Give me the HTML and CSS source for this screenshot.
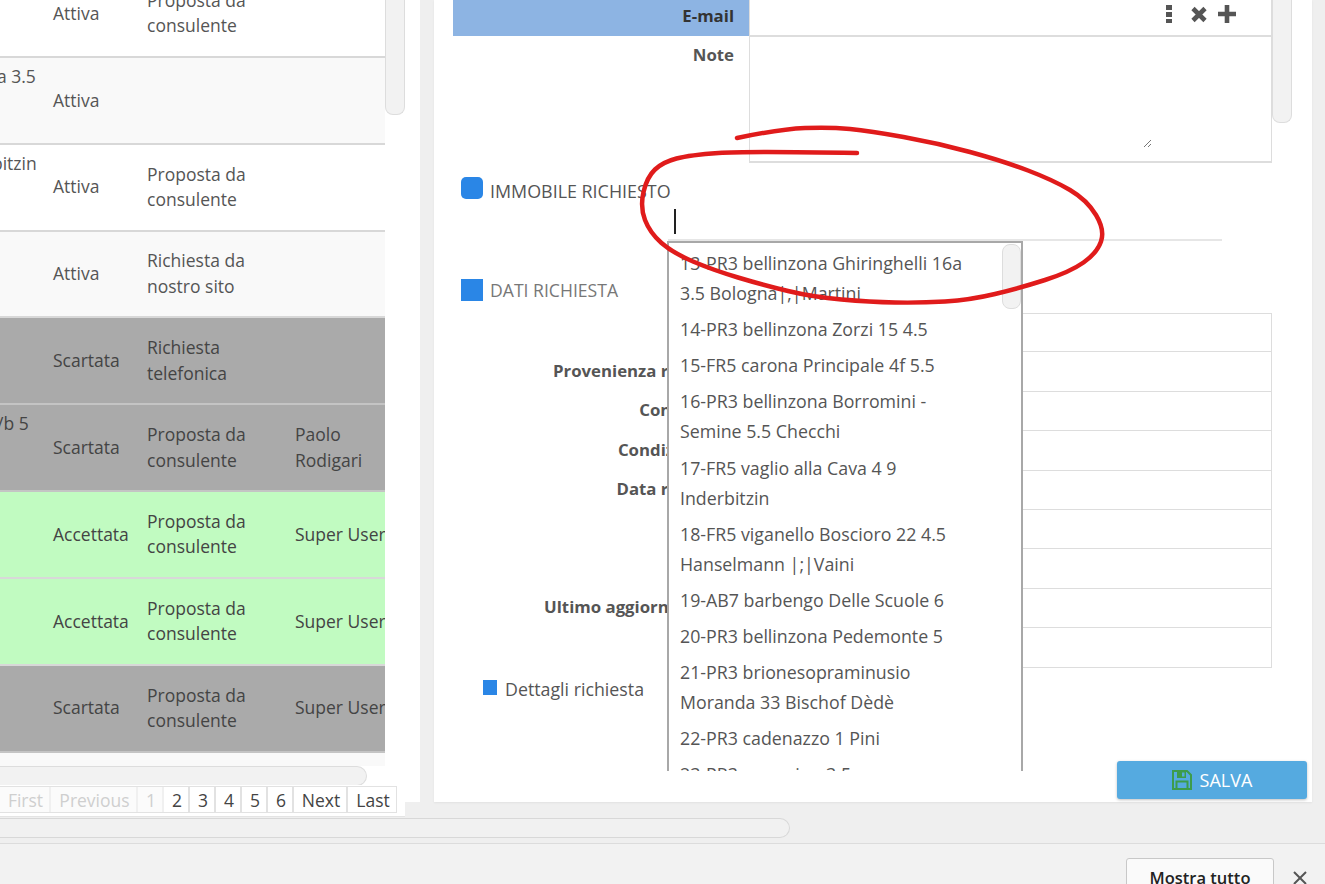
FILE: index.html
```html
<!DOCTYPE html>
<html lang="it">
<head>
  <meta charset="UTF-8">
  <title>Richieste</title>
  <link rel="stylesheet" href="styles.css">
</head>
<body>
  <div class="panels">
    <!-- elenco richieste -->
    <div class="list-panel">
      <div class="list">
        <div class="list-body">
          <div class="table">
            <div class="rows">
              <div class="row"><div class="c-name"></div><div class="c-state">Attiva</div><div class="c-source">Proposta da consulente</div><div class="c-user"></div></div>
              <div class="row alt"><div class="c-name">a 3.5</div><div class="c-state">Attiva</div><div class="c-source"></div><div class="c-user"></div></div>
              <div class="row"><div class="c-name cut">bitzin</div><div class="c-state">Attiva</div><div class="c-source">Proposta da consulente</div><div class="c-user"></div></div>
              <div class="row alt"><div class="c-name"></div><div class="c-state">Attiva</div><div class="c-source">Richiesta da nostro sito</div><div class="c-user"></div></div>
              <div class="row grey"><div class="c-name"></div><div class="c-state">Scartata</div><div class="c-source">Richiesta telefonica</div><div class="c-user"></div></div>
              <div class="row grey"><div class="c-name">/b 5</div><div class="c-state">Scartata</div><div class="c-source">Proposta da consulente</div><div class="c-user">Paolo Rodigari</div></div>
              <div class="row green"><div class="c-name"></div><div class="c-state">Accettata</div><div class="c-source">Proposta da consulente</div><div class="c-user">Super User</div></div>
              <div class="row green"><div class="c-name"></div><div class="c-state">Accettata</div><div class="c-source">Proposta da consulente</div><div class="c-user">Super User</div></div>
              <div class="row grey"><div class="c-name"></div><div class="c-state">Scartata</div><div class="c-source">Proposta da consulente</div><div class="c-user">Super User</div></div>
            </div>
            <div class="table-foot"></div>
            <div class="hscroll"><div class="hscroll-thumb"></div></div>
          </div>
          <div class="vscroll"><div class="vscroll-thumb"></div></div>
        </div>
        <div class="pager">
          <a class="off first">First</a>
          <a class="off prev">Previous</a>
          <a class="off num">1</a>
          <a class="num">2</a>
          <a class="num">3</a>
          <a class="num">4</a>
          <a class="num">5</a>
          <a class="num">6</a>
          <a class="next">Next</a>
          <a class="last">Last</a>
        </div>
      </div>
      <div class="list-side"></div>
    </div>

    <!-- scheda richiesta -->
    <div class="card">
      <div class="card-main">
        <div class="form">
          <div class="field email">
            <div class="field-label">E-mail</div>
            <div class="field-input">
              <svg class="tool" width="72" height="24" viewBox="0 0 72 24">
                <path fill="#555" d="M0 4h6v5H0zM0 11h6v5H0zM0 18h6v4H0z"/>
                <path fill="none" stroke="#555" stroke-width="4.600" d="M27 7.500l12 12M39 7.500l-12 12"/>
                <path fill="none" stroke="#555" stroke-width="4.600" d="M61 4v18M52 13h18"/>
              </svg>
            </div>
          </div>
          <div class="field note">
            <div class="field-label">Note</div>
            <div class="field-input">
              <svg class="grip" width="10" height="10" viewBox="0 0 10 10">
                <path fill="none" stroke="#777" d="M1 9l7-7M5 9l3-3"/>
              </svg>
            </div>
          </div>

          <div class="section">
            <span class="mark round"></span>
            <span class="section-low">IMMOBILE RICHIESTO</span>
          </div>
          <div class="search-line"><span class="caret"></span></div>

          <div class="section second">
            <span class="mark"></span>
            <span class="muted">DATI RICHIESTA</span>
          </div>
          <div class="fields">
            <div class="field"><div class="field-label"></div><div class="field-input"></div></div>
            <div class="field"><div class="field-label">Provenienza richiesta</div><div class="field-input"></div></div>
            <div class="field"><div class="field-label">Consulente</div><div class="field-input"></div></div>
            <div class="field"><div class="field-label">Condizione rif</div><div class="field-input"></div></div>
            <div class="field"><div class="field-label">Data richiesta</div><div class="field-input"></div></div>
            <div class="field"><div class="field-label"></div><div class="field-input"></div></div>
            <div class="field"><div class="field-label"></div><div class="field-input"></div></div>
            <div class="field"><div class="field-label">Ultimo aggiornamento</div><div class="field-input"></div></div>
            <div class="field"><div class="field-label">Note</div><div class="field-input"></div></div>
          </div>
          <div class="details">
            <span class="mark small"></span>
            <span>Dettagli richiesta</span>
          </div>
        </div>
        <div class="vscroll form-scroll"><div class="vscroll-thumb"></div></div>
      </div>
      <div class="card-foot">
        <button class="save">
          <svg width="20" height="20" viewBox="0 0 20 20">
            <path fill="none" stroke="#3d9c4b" stroke-width="2" d="M1 1h14l4 4v14H1z"/>
            <path fill="#3d9c4b" d="M5 1h9v7H5z"/>
            <path fill="#55aae0" d="M10 2.500h2.500v4H10z"/>
            <path fill="none" stroke="#3d9c4b" stroke-width="2" d="M4.500 19v-7.500h11V19"/>
          </svg>
          SALVA
        </button>
      </div>

      <!-- tendina immobili -->
      <div class="dropdown">
        <div class="option">13-PR3 bellinzona Ghiringhelli 16a 3.5 Bologna|;|Martini</div>
        <div class="option">14-PR3 bellinzona Zorzi 15 4.5</div>
        <div class="option">15-FR5 carona Principale 4f 5.5</div>
        <div class="option">16-PR3 bellinzona Borromini - Semine 5.5 Checchi</div>
        <div class="option">17-FR5 vaglio alla Cava 4 9 Inderbitzin</div>
        <div class="option">18-FR5 viganello Boscioro 22 4.5 Hanselmann |;|Vaini</div>
        <div class="option">19-AB7 barbengo Delle Scuole 6</div>
        <div class="option">20-PR3 bellinzona Pedemonte 5</div>
        <div class="option">21-PR3 brionesopraminusio Moranda 33 Bischof Dèdè</div>
        <div class="option">22-PR3 cadenazzo 1 Pini</div>
        <div class="option">23-PR3 camorino 3.5</div>
        <div class="dropdown-thumb"></div>
      </div>
    </div>
  </div>

  <div class="page-scroll"><div class="page-scroll-thumb"></div></div>

  <div class="downloads">
    <button class="show-all">Mostra tutto</button>
    <svg width="14" height="14" viewBox="0 0 14 14">
      <path fill="none" stroke="#555" stroke-width="2" d="M1 1l12 12M13 1L1 13"/>
    </svg>
  </div>

  <!-- cerchio rosso a mano sopra lo screenshot -->
  <svg class="scribble" width="1325" height="884" viewBox="0 0 1325 884">
    <path d="M737 138Q780 129 805 128Q830 127 850 129Q870 131 903.500 137Q937 143 970 152Q1003 161 1028 170.500Q1053 180 1070 190Q1087 200 1096 215Q1105 230 1101 241.500Q1097 253 1083.500 262.500Q1070 272 1045 280Q1020 288 995 294Q970 300 945 301.500Q920 303 895 302.500Q870 302 841.500 299.500Q813 297 788 291Q763 285 738 277.500Q713 270 693 261.500Q673 253 661.500 243Q650 233 645 220Q640 207 643.500 192Q647 177 655 169.500Q663 162 676.500 158.500Q690 155 718.500 153Q747 151 857 153"/>
  </svg>
</body>
</html>
```

FILE: styles.css
```css
body {
  margin: 0;
  width: 1325px;
  height: 884px;
  overflow: hidden;
  position: relative;
  background: #efefef;
  color: #555;
  font-family: 'Open Sans', sans-serif;
  font-size: 16px;
}

.panels {
  display: flex;
  height: 818px;
}

/* left list */
.list-panel {
  display: flex;
  width: 420px;
  margin-right: 14px;
}

.list {
  width: 405px;
  height: 817px;
  background: #fff;
  border-bottom: 1px solid #e4e4e4;
  box-sizing: border-box;
}

.list-side {
  width: 15px;
  height: 802px;
  background: #fff;
}

.list-body {
  display: flex;
  height: 785px;
  overflow: hidden;
}

.table {
  width: 385px;
  flex: none;
  overflow: hidden;
  font-size: 17.500px;
}

.rows {
  margin-top: -29px;
}

.row {
  display: flex;
  height: 86.850px;
  box-sizing: border-box;
  border-bottom: 2px solid #d8d8d8;
  background: #fff;
  line-height: 25.500px;
  overflow: hidden;
}

.row.alt {
  background: #f9f9f9;
}

.row.grey {
  background: #aaaaaa;
  color: #444;
  border-bottom-color: #c4c4c4;
}

.row.green {
  background: #c1fbc1;
  color: #444;
}

.c-name {
  width: 37px;
  flex: none;
  margin-right: 16px;
  padding-top: 6px;
  white-space: nowrap;
  text-indent: -3px;
}

.c-name.cut {
  text-indent: -8px;
}

.c-state {
  width: 94px;
  flex: none;
  align-self: center;
}

.c-source {
  width: 148px;
  flex: none;
  align-self: center;
  padding-right: 40px;
  box-sizing: border-box;
}

.c-user {
  flex: none;
  width: 100px;
  align-self: center;
}

.table-foot {
  height: 13px;
  background: #f9f9f9;
}

.hscroll {
  height: 21px;
  background: #fff;
}

.hscroll-thumb {
  width: 367px;
  height: 20px;
  box-sizing: border-box;
  background: #f2f2f2;
  border: 1px solid #ddd;
  border-left: none;
  border-radius: 0 10px 10px 0;
}

.vscroll {
  width: 20px;
  flex: none;
}

.vscroll-thumb {
  height: 115px;
  box-sizing: border-box;
  background: #f2f2f2;
  border: 1px solid #ddd;
  border-top: none;
  border-radius: 0 0 8px 8px;
}

.pager {
  display: flex;
  height: 27px;
  margin-top: 1px;
  width: 397px;
  box-sizing: border-box;
  border: 1px solid #e2e2e2;
  border-left: none;
  color: #444;
  font-size: 17.500px;
  line-height: 26px;
  text-align: center;
}

.pager a {
  box-sizing: border-box;
  padding-left: 2px;
  border-right: 2px solid #e2e2e2;
}

.pager a:last-child {
  border-right: none;
}

.pager .off {
  color: #cfcfcf;
  background: #fbfbfb;
  border-right-color: #f0f0f0;
}

.pager .first { width: 51px; }
.pager .prev { width: 87px; }
.pager .num { width: 26px; }
.pager .next { width: 54px; }
.pager .last { width: 48px; }

/* right card */
.card {
  position: relative;
  width: 878px;
  height: 802px;
  background: #fff;
  box-shadow: 0 1px 2px rgba(0, 0, 0, 0.06);
}

.card-main {
  display: flex;
  height: 761px;
}

.form {
  width: 838px;
  flex: none;
  padding-left: 19px;
  box-sizing: border-box;
}

.form-scroll .vscroll-thumb {
  height: 123px;
}

.field {
  display: flex;
  height: 39.400px;
}

.field-label {
  width: 296px;
  flex: none;
  box-sizing: border-box;
  padding: 6.500px 15px 0 0;
  text-align: right;
  font-size: 16.800px;
  font-weight: 700;
  color: #555;
  white-space: nowrap;
}

.field-input {
  flex: 1;
  border: 1px solid #ddd;
  border-top: none;
  position: relative;
}

.fields {
  margin-top: 12px;
}

.fields .field:first-child .field-input {
  border-top: 1px solid #ddd;
}

.email {
  height: 37px;
}

.email .field-label {
  background: #8db4e3;
  height: 36px;
  padding-top: 4px;
  color: #333;
}

.email .field-input {
  border-bottom-width: 2px;
}

.tool {
  position: absolute;
  right: 33px;
  top: 1px;
}

.note {
  height: 126px;
}

.note .field-label {
  padding-top: 6px;
}

.note .field-input {
  border-bottom-width: 2px;
}

.grip {
  position: absolute;
  right: 118px;
  bottom: 13px;
}

.section {
  display: flex;
  align-items: center;
  gap: 7px;
  height: 22px;
  margin: 14px 0 0 8px;
  font-size: 17.600px;
  color: #555;
}

.section.second {
  margin-top: 38px;
}

.section-low {
  padding-top: 5px;
  font-size: 17.900px;
}

.muted {
  color: #777;
}

.mark {
  display: block;
  width: 22px;
  height: 22px;
  background: #2a86e6;
}

.mark.round {
  border-radius: 5px;
}

.mark.small {
  width: 14px;
  height: 15px;
  margin-top: -3px;
}

.search-line {
  height: 42px;
  margin-left: 215px;
  width: 554px;
  box-sizing: border-box;
  border-bottom: 2px solid #e6e6e6;
  padding: 10px 0 0 6px;
}

.caret {
  display: block;
  width: 2px;
  height: 25px;
  background: #222;
}

.details {
  display: flex;
  align-items: center;
  gap: 8px;
  margin: 9px 0 0 30px;
  font-size: 17.800px;
}

.card-foot {
  display: flex;
  justify-content: flex-end;
  padding-right: 5px;
}

.save {
  display: flex;
  align-items: center;
  justify-content: center;
  gap: 8px;
  width: 190px;
  height: 38px;
  padding: 0;
  border: none;
  border-radius: 3px;
  background: #55aae0;
  color: #fff;
  font-family: inherit;
  font-size: 18px;
  box-shadow: 0 1px 3px rgba(0, 0, 0, 0.25);
}

.dropdown {
  position: absolute;
  left: 233px;
  top: 241px;
  width: 356px;
  height: 530px;
  box-sizing: border-box;
  overflow: hidden;
  padding-top: 2px;
  background: #fff;
  border: 2px solid #a8a8a8;
  border-bottom: none;
  font-size: 17.800px;
  color: #555;
}

.option {
  padding: 3px 50px 3px 11px;
  line-height: 30.100px;
}

.dropdown-thumb {
  position: absolute;
  right: 0;
  top: 1px;
  width: 19px;
  height: 65px;
  box-sizing: border-box;
  background: #f2f2f2;
  border: 1px solid #ddd;
  border-radius: 8px;
}

.page-scroll {
  height: 20px;
}

.page-scroll-thumb {
  width: 790px;
  height: 20px;
  box-sizing: border-box;
  background: #f1f1f1;
  border: 1px solid #d8d8d8;
  border-left: none;
  border-radius: 0 10px 10px 0;
}

.downloads {
  display: flex;
  align-items: flex-start;
  justify-content: flex-end;
  gap: 19px;
  height: 41px;
  margin-top: 5px;
  box-sizing: border-box;
  border-top: 1px solid #dcdcdc;
  padding: 14px 18px 0 0;
  background: #f2f2f2;
}

.downloads svg {
  margin-top: 13px;
}

.show-all {
  width: 148px;
  height: 40px;
  padding: 0 0 2px;
  background: #fafafa;
  border: 1px solid #c8c8c8;
  border-radius: 3px;
  color: #222;
  font-family: inherit;
  font-size: 16.500px;
  font-weight: 600;
}

.scribble {
  position: absolute;
  left: 0;
  top: 0;
  pointer-events: none;
}

.scribble path {
  fill: none;
  stroke: #e01b1b;
  stroke-width: 4.500;
  stroke-linecap: round;
}
```
